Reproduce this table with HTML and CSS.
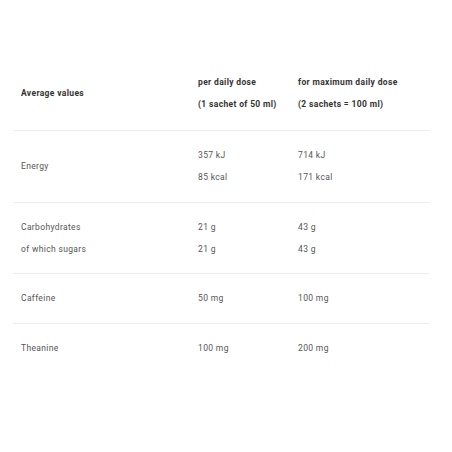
FILE: index.html
```html
<!DOCTYPE html>
<html>
<head>
<meta charset="utf-8">
<link rel="stylesheet" href="styles.css">
</head>
<body>
<div class="wrap">
<table class="nutri">
  <thead>
    <tr>
      <th class="c1"><p>Average values</p></th>
      <th class="c2"><p>per daily dose</p><p>(1 sachet of 50 ml)</p></th>
      <th class="c3"><p>for maximum daily dose</p><p>(2 sachets = 100 ml)</p></th>
    </tr>
  </thead>
  <tbody>
    <tr>
      <td class="c1"><p>Energy</p></td>
      <td class="c2"><p>357 kJ</p><p>85 kcal</p></td>
      <td class="c3"><p>714 kJ</p><p>171 kcal</p></td>
    </tr>
    <tr>
      <td class="c1"><p>Carbohydrates</p><p>of which sugars</p></td>
      <td class="c2"><p>21 g</p><p>21 g</p></td>
      <td class="c3"><p>43 g</p><p>43 g</p></td>
    </tr>
    <tr>
      <td class="c1"><p>Caffeine</p></td>
      <td class="c2"><p>50 mg</p></td>
      <td class="c3"><p>100 mg</p></td>
    </tr>
    <tr class="last">
      <td class="c1"><p>Theanine</p></td>
      <td class="c2"><p>100 mg</p></td>
      <td class="c3"><p>200 mg</p></td>
    </tr>
  </tbody>
</table>
</div>
</body>
</html>
```
FILE: styles.css
```css
html, body {
  margin: 0;
  padding: 0;
  background: #fff;
}
.wrap {
  padding: 58px 23px 0 13px;
}
.nutri {
  width: 416px;
  border-collapse: collapse;
  font-family: Roboto, "Liberation Sans", sans-serif;
  font-size: 8.5px;
  letter-spacing: 0.35px;
  color: #555;
}
.nutri th, .nutri td {
  text-align: left;
  vertical-align: middle;
  padding: 13.25px 0 13.25px 8px;
  border-bottom: 1px solid #ececec;
}
.nutri th {
  font-weight: 700;
  color: #333;
  padding-bottom: 14.75px;
}
.nutri tr.last td {
  border-bottom: none;
}
.nutri p {
  margin: 0;
  line-height: 22px;
}
.c1 { width: 169px; }
.c2 { width: 92px; }
.c3 { width: auto; }
```
